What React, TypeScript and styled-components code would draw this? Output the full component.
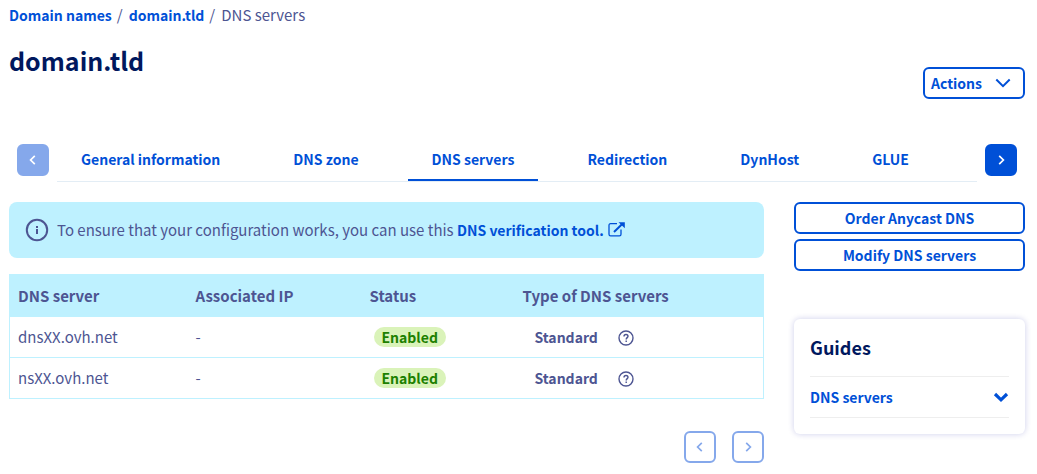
import React from 'react';
import styled, { createGlobalStyle } from 'styled-components';

const blue = '#0050d7';
const paleBlue = '#85a8eb';
const navy = '#00185e';
const slate = '#4d5592';
const sky = '#bef1ff';

const GlobalStyle = createGlobalStyle`
  *, *::before, *::after { box-sizing: border-box; }
  body {
    margin: 0;
    background: #fff;
    color: ${slate};
    font-family: "Source Sans Pro", "Noto Sans CJK SC", sans-serif;
    font-size: 15px;
    line-height: 24px;
  }
  button { font: inherit; font-size: 14px; cursor: pointer; }
  a { color: ${blue}; font-size: 14px; font-weight: 700; text-decoration: none; }
`;

const Page = styled.div`
  padding: 3px 12px 11px 9px;
`;

const Breadcrumb = styled.nav`
  ol {
    display: flex;
    margin: 0;
    padding: 0;
    list-style: none;
  }
  li + li::before {
    content: '/';
    padding: 0 6px 0 5px;
  }
`;

const Header = styled.header`
  display: flex;
  justify-content: space-between;
  align-items: flex-end;
  height: 72px;
`;

const Title = styled.h1`
  align-self: flex-start;
  margin: 16px 0 0;
  color: ${navy};
  font-size: 25px;
  line-height: 34px;
`;

const OutlineButton = styled.button<{ $block?: boolean }>`
  display: flex;
  align-items: center;
  justify-content: ${(p) => (p.$block ? 'center' : 'space-between')};
  gap: 13px;
  width: ${(p) => (p.$block ? '100%' : 'auto')};
  height: 32px;
  padding: ${(p) => (p.$block ? '0 8px' : '0 12px 0 6px')};
  border: 2px solid ${blue};
  border-radius: 6px;
  background: #fff;
  color: ${blue};
  font-weight: 700;
`;

const TabBar = styled.div`
  display: flex;
  align-items: flex-start;
  gap: 8px;
  margin-top: 45px;
  padding: 0 8px;
`;

const SquareButton = styled.button<{ $tone: 'solid' | 'faded' | 'outline' }>`
  display: flex;
  flex: none;
  align-items: center;
  justify-content: center;
  width: 32px;
  height: 32px;
  padding: 0;
  border: 2px solid ${(p) => (p.$tone === 'solid' ? blue : paleBlue)};
  border-radius: 6px;
  background: ${(p) => (p.$tone === 'solid' ? blue : p.$tone === 'faded' ? paleBlue : '#fff')};
  color: ${(p) => (p.$tone === 'outline' ? paleBlue : '#fff')};
`;

const TabList = styled.nav`
  display: flex;
  flex: 1;
  gap: 25px;
  min-width: 0;
  height: 38px;
  border-bottom: 1px solid #e3edf5;
`;

const Tab = styled.a<{ $active?: boolean }>`
  height: 37px;
  padding: 3px 24px 0;
  border-bottom: 2px solid ${(p) => (p.$active ? blue : 'transparent')};
  white-space: nowrap;
`;

const Columns = styled.div`
  display: grid;
  grid-template-columns: minmax(0, 1fr) 231px;
  gap: 30px;
  align-items: start;
  margin-top: 20px;
`;

const Notice = styled.div`
  display: flex;
  align-items: center;
  gap: 8px;
  min-height: 56px;
  padding: 0 16px;
  border-radius: 8px;
  background: ${sky};

  p { margin: 0; }
  a svg { margin-left: 4px; vertical-align: -1px; }
`;

const ServerTable = styled.table`
  width: 100%;
  margin-top: 16px;
  border: 1px solid ${sky};
  border-collapse: collapse;
  table-layout: fixed;

  th, td {
    padding: 0 8px;
    text-align: left;
  }
  th {
    height: 42px;
    background: ${sky};
  }
  td {
    height: 41px;
    border-bottom: 1px solid ${sky};
  }
`;

const HeadCell = styled.th<{ $width?: number }>`
  width: ${(p) => (p.$width ? `${p.$width}px` : 'auto')};
`;

const Badge = styled.span`
  display: block;
  width: fit-content;
  margin-left: 4px;
  padding: 0 8px;
  border-radius: 10px;
  background: #daf3b9;
  color: #1d8000;
  font-size: 14px;
  font-weight: 700;
  line-height: 20px;
`;

const ServerType = styled.div`
  display: flex;
  align-items: center;
  gap: 20px;
  padding-left: 12px;
  font-size: 14px;
`;

const HelpButton = styled.button`
  display: flex;
  padding: 2px 0 0;
  border: 0;
  background: none;
  color: ${slate};
`;

const Pager = styled.div`
  display: flex;
  justify-content: flex-end;
  gap: 16px;
  margin-top: 32px;
`;

const Actions = styled.div`
  display: grid;
  gap: 5px;
`;

const Guides = styled.section`
  margin-top: 48px;
  padding: 16px;
  border-radius: 6px;
  box-shadow: 0 0 6px rgba(0, 14, 156, 0.2);

  h2 {
    margin: 0 0 16px;
    color: ${navy};
    font-size: 18px;
    line-height: 25px;
  }
`;

const GuideToggle = styled.button`
  display: flex;
  align-items: center;
  justify-content: space-between;
  width: 100%;
  height: 42px;
  padding: 0;
  border: solid #eee;
  border-width: 1px 0;
  background: none;
  color: ${blue};
  font-weight: 700;
`;

const Chevron = ({ left }: { left?: boolean }) => (
  <svg width="12" height="12" viewBox="0 0 12 12" fill="none" stroke="currentColor" strokeWidth="1.7" aria-hidden="true">
    <path d={left ? 'M7.8 1.8 3.6 6l4.2 4.2' : 'M4.2 1.8 8.4 6l-4.2 4.2'} />
  </svg>
);

const InfoIcon = () => (
  <svg width="24" height="24" viewBox="0 0 24 24" fill="none" stroke={slate} strokeWidth="2" aria-hidden="true">
    <circle cx="12" cy="12" r="10.2" />
    <path d="M12 11v5M12 8v2" />
  </svg>
);

const ExternalIcon = () => (
  <svg width="17" height="15" viewBox="0 0 17 15" fill="none" stroke="currentColor" aria-hidden="true">
    <path d="M9 1.7H2.6Q1 1.7 1 3.3v8.9q0 1.6 1.6 1.6h8.8q1.6 0 1.6-1.6V7.5" strokeWidth="1.3" />
    <path d="M6 10 14.5 1.8" strokeWidth="2" />
    <path d="M10.5.2H16.8V6.3z" fill="currentColor" stroke="none" />
  </svg>
);

const HelpIcon = () => (
  <svg width="16" height="16" viewBox="0 0 16 16" fill="none" stroke="currentColor" strokeWidth="1.4" aria-hidden="true">
    <circle cx="8" cy="8" r="7" />
    <path d="M6 6.6C6 5.2 6.8 4.5 8 4.5s2 .8 2 1.8C10 7.6 8.2 7.7 8.2 9.4M8.2 10.5V12" />
  </svg>
);

const tabs = ['General information', 'DNS zone', 'DNS servers', 'Redirection', 'DynHost', 'GLUE'];
const servers = ['dnsXX.ovh.net', 'nsXX.ovh.net'];

export default function App() {
  return (
    <>
      <GlobalStyle />
      <Page>
        <Breadcrumb aria-label="Breadcrumb">
          <ol>
            <li><a href="#domains">Domain names</a></li>
            <li><a href="#domain">domain.tld</a></li>
            <li aria-current="page">DNS servers</li>
          </ol>
        </Breadcrumb>
        <Header>
          <Title>domain.tld</Title>
          <OutlineButton>
            Actions
            <svg width="16" height="10" viewBox="0 0 16 10" fill="none" stroke="currentColor" strokeWidth="2" aria-hidden="true">
              <path d="M1.3 1.5 8 8.2l6.7-6.7" />
            </svg>
          </OutlineButton>
        </Header>
        <TabBar>
          <SquareButton $tone="faded" aria-label="Previous tabs"><Chevron left /></SquareButton>
          <TabList aria-label="Domain sections">
            {tabs.map((tab) => (
              <Tab key={tab} href="#tab" $active={tab === 'DNS servers'}>{tab}</Tab>
            ))}
          </TabList>
          <SquareButton $tone="solid" aria-label="Next tabs"><Chevron /></SquareButton>
        </TabBar>
        <Columns>
          <main>
            <Notice>
              <InfoIcon />
              <p>
                To ensure that your configuration works, you can use this{' '}
                <a href="#tool">DNS verification tool.<ExternalIcon /></a>
              </p>
            </Notice>
            <ServerTable>
              <thead>
                <tr>
                  <HeadCell $width={178}>DNS server</HeadCell>
                  <HeadCell $width={174}>Associated IP</HeadCell>
                  <HeadCell $width={153}>Status</HeadCell>
                  <HeadCell>Type of DNS servers</HeadCell>
                </tr>
              </thead>
              <tbody>
                {servers.map((server) => (
                  <tr key={server}>
                    <td>{server}</td>
                    <td>-</td>
                    <td><Badge>Enabled</Badge></td>
                    <td>
                      <ServerType>
                        <strong>Standard</strong>
                        <HelpButton aria-label="About this type"><HelpIcon /></HelpButton>
                      </ServerType>
                    </td>
                  </tr>
                ))}
              </tbody>
            </ServerTable>
            <Pager>
              <SquareButton $tone="outline" aria-label="Previous page"><Chevron left /></SquareButton>
              <SquareButton $tone="outline" aria-label="Next page"><Chevron /></SquareButton>
            </Pager>
          </main>
          <aside>
            <Actions>
              <OutlineButton $block>Order Anycast DNS</OutlineButton>
              <OutlineButton $block>Modify DNS servers</OutlineButton>
            </Actions>
            <Guides>
              <h2>Guides</h2>
              <GuideToggle aria-expanded="false">
                DNS servers
                <svg width="16" height="12" viewBox="0 0 16 12" fill="none" stroke="currentColor" strokeWidth="3.2" aria-hidden="true">
                  <path d="M2 3l6 5.8L14 3" />
                </svg>
              </GuideToggle>
            </Guides>
          </aside>
        </Columns>
      </Page>
    </>
  );
}
